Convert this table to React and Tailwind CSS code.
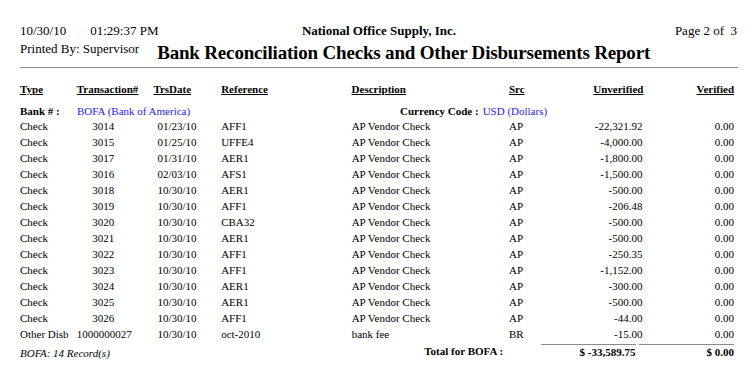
const rows = [
  ['Check', '3014', '01/23/10', 'AFF1', 'AP Vendor Check', 'AP', '-22,321.92'],
  ['Check', '3015', '01/25/10', 'UFFE4', 'AP Vendor Check', 'AP', '-4,000.00'],
  ['Check', '3017', '01/31/10', 'AER1', 'AP Vendor Check', 'AP', '-1,800.00'],
  ['Check', '3016', '02/03/10', 'AFS1', 'AP Vendor Check', 'AP', '-1,500.00'],
  ['Check', '3018', '10/30/10', 'AER1', 'AP Vendor Check', 'AP', '-500.00'],
  ['Check', '3019', '10/30/10', 'AFF1', 'AP Vendor Check', 'AP', '-206.48'],
  ['Check', '3020', '10/30/10', 'CBA32', 'AP Vendor Check', 'AP', '-500.00'],
  ['Check', '3021', '10/30/10', 'AER1', 'AP Vendor Check', 'AP', '-500.00'],
  ['Check', '3022', '10/30/10', 'AFF1', 'AP Vendor Check', 'AP', '-250.35'],
  ['Check', '3023', '10/30/10', 'AFF1', 'AP Vendor Check', 'AP', '-1,152.00'],
  ['Check', '3024', '10/30/10', 'AER1', 'AP Vendor Check', 'AP', '-300.00'],
  ['Check', '3025', '10/30/10', 'AER1', 'AP Vendor Check', 'AP', '-500.00'],
  ['Check', '3026', '10/30/10', 'AFF1', 'AP Vendor Check', 'AP', '-44.00'],
  ['Other Disb', '1000000027', '10/30/10', 'oct-2010', 'bank fee', 'BR', '-15.00'],
]

export default function App() {
  return (
    <div className="w-[754px] h-[378px] bg-white text-black [font-family:'Liberation_Serif',serif] px-[20px] pt-[23px] overflow-hidden">
      {/* page header */}
      <div className="grid grid-cols-[1fr_auto_1fr] h-[16px] leading-[16px] text-[13px] w-[718px]">
        <div className="flex">
          <span>10/30/10</span>
          <span className="ml-[24px]">01:29:37 PM</span>
        </div>
        <div className="font-bold">National Office Supply, Inc.</div>
        <div className="text-right pr-[1px]">Page 2 of&nbsp; 3</div>
      </div>
      <div className="flex items-start mt-[2px] h-[22px]">
        <span className="text-[13px] leading-[16px]">Printed By: Supervisor</span>
        <span className="ml-[18px] mt-[1px] text-[19px] leading-[22px] font-bold tracking-[-0.18px]">
          Bank Reconciliation Checks and Other Disbursements Report
        </span>
      </div>
      <div className="mt-[4px] h-px w-[718px] bg-[#8a8a8a]" />

      {/* column headings */}
      <div className="flex mt-[14px] h-[14px] leading-[14px] text-[11px] font-bold underline">
        <div className="w-[57px]">Type</div>
        <div className="w-[77px]">Transaction#</div>
        <div className="w-[68px]">TrsDate</div>
        <div className="w-[131px]">Reference</div>
        <div className="w-[158px]">Description</div>
        <div className="w-[40px]">Src</div>
        <div className="w-[95px] text-right">Unverified</div>
        <div className="w-[91px] text-right">Verified</div>
      </div>

      {/* bank line */}
      <div className="flex mt-[7px] h-[15px] leading-[16px] text-[11px]">
        <div className="w-[57px] font-bold">Bank # :</div>
        <div className="w-[323px] text-[#2323f5]">BOFA (Bank of America)</div>
        <div className="font-bold">Currency Code :</div>
        <div className="ml-[4px] text-[#2323f5]">USD (Dollars)</div>
      </div>

      {rows.map((r, i) => (
        <div key={i} className="flex h-[16px] leading-[16px] text-[11px] whitespace-nowrap">
          <div className="w-[57px]">{r[0]}</div>
          <div className="w-[77px]">
            <div className="w-[53px] text-center">{r[1]}</div>
          </div>
          <div className="w-[68px] pl-[4px]">{r[2]}</div>
          <div className="w-[131px]">{r[3]}</div>
          <div className="w-[158px]">{r[4]}</div>
          <div className="w-[40px]">{r[5]}</div>
          <div className="w-[94px] text-right">{r[6]}</div>
          <div className="w-[92px] text-right">0.00</div>
        </div>
      ))}

      {/* totals */}
      <div className="flex text-[11px] leading-[14px] whitespace-nowrap">
        <div className="w-[406px] pt-[4px] italic">BOFA: 14 Record(s)</div>
        <div className="w-[117px] pt-[2px] font-bold">Total for BOFA :</div>
        <div className="w-[96px] mt-[2px] border-t border-[#8a8a8a] text-right pr-[1px] font-bold">$ -33,589.75</div>
        <div className="w-[95px] ml-[3px] mt-[2px] border-t border-[#8a8a8a] text-right font-bold">$ 0.00</div>
      </div>
    </div>
  )
}
